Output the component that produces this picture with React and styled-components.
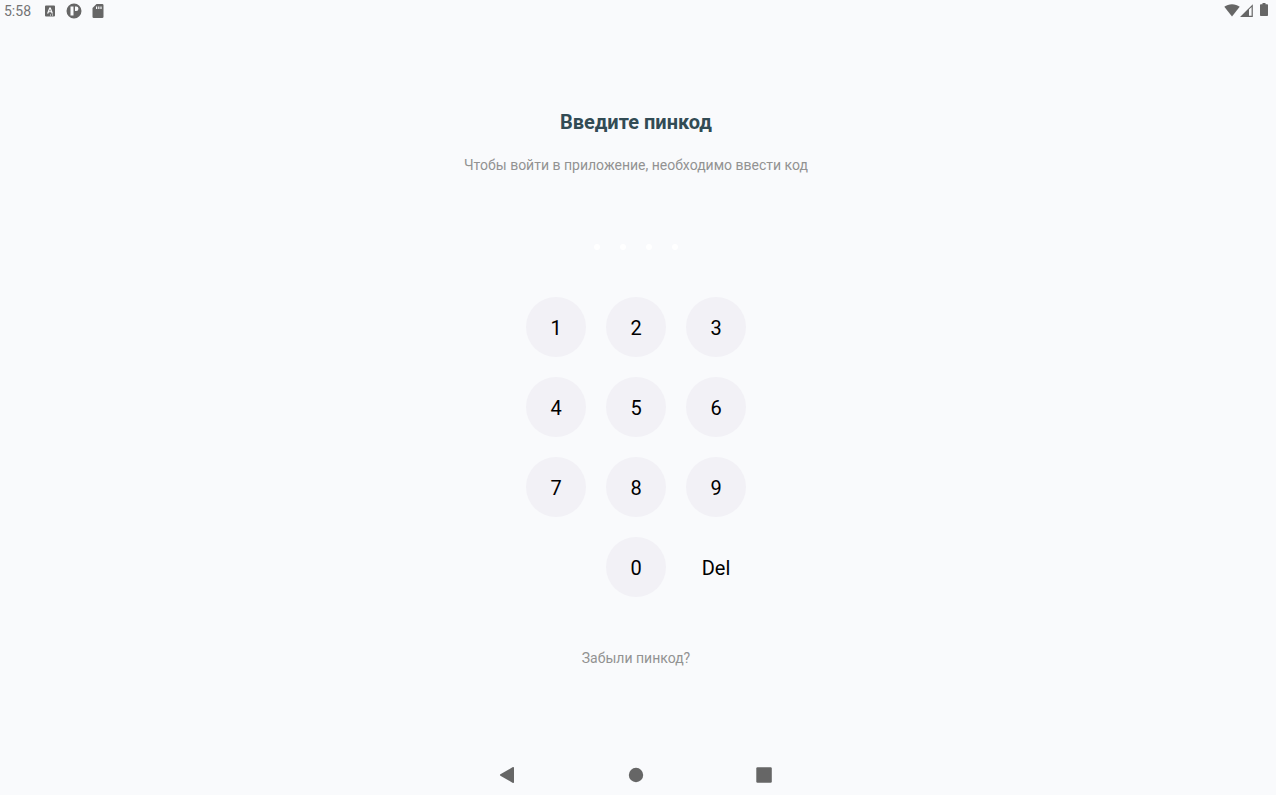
import React, { useState } from "react";
import styled, { createGlobalStyle } from "styled-components";

const GlobalStyle = createGlobalStyle`
  *, *::before, *::after { box-sizing: border-box; }
  body {
    margin: 0;
    background: #f9fafc;
    font-family: Roboto, "Liberation Sans", sans-serif;
  }
`;

const Screen = styled.div`
  min-height: 100vh;
  display: flex;
  flex-direction: column;
  padding: 0 4px 0 0;
  background: #f9fafc;
`;

const StatusBar = styled.header`
  display: flex;
  justify-content: space-between;
  align-items: center;
  height: 22px;
  padding: 0 0 0 4px;
  color: #666666;
`;

const StatusGroup = styled.div`
  display: flex;
  align-items: center;
  gap: ${({ $gap }) => $gap}px;
`;

const Clock = styled.time`
  font-size: 14px;
  line-height: 20px;
  margin-right: 3px;
  color: #737375;
`;

const Glyph = styled.svg`
  display: block;
  fill: currentColor;
`;

const Content = styled.main`
  flex: 1;
  display: flex;
  flex-direction: column;
  align-items: center;
  padding-top: 88px;
`;

const Title = styled.h1`
  margin: 0;
  font-size: 20px;
  line-height: 24px;
  font-weight: 700;
  color: #324b54;
`;

const Hint = styled.p`
  margin: 21px 0 0;
  font-size: 14px;
  line-height: 20px;
  color: #929292;
`;

const Dots = styled.div`
  display: flex;
  gap: 20px;
  margin-top: 69px;
`;

const Dot = styled.span`
  width: 6px;
  height: 6px;
  border-radius: 50%;
  background: ${({ $filled }) => ($filled ? "#324b54" : "#ffffff")};
`;

const Keypad = styled.div`
  display: grid;
  grid-template-columns: repeat(3, 60px);
  gap: 20px;
  margin-top: 47px;
`;

const Key = styled.button`
  height: 60px;
  padding: 2px 0 0;
  border: 0;
  border-radius: 50%;
  background: ${({ $plain }) => ($plain ? "transparent" : "#f2f1f6")};
  color: #000000;
  font-family: inherit;
  font-size: 20px;
  line-height: 24px;
  cursor: pointer;
`;

const ZeroKey = styled(Key)`
  grid-column: 2;
`;

const ForgotButton = styled.button`
  margin-top: 51px;
  padding: 0;
  border: 0;
  background: none;
  color: #929292;
  font-family: inherit;
  font-size: 14px;
  line-height: 20px;
  cursor: pointer;
`;

const NavBar = styled.nav`
  display: flex;
  justify-content: center;
  gap: 104px;
  padding: 8px 0;
`;

const NavButton = styled.button`
  padding: 0;
  border: 0;
  background: none;
  color: #666666;
  cursor: pointer;
`;

const PIN_LENGTH = 4;
const DIGITS = ["1", "2", "3", "4", "5", "6", "7", "8", "9"];

export default function App() {
  const [pin, setPin] = useState("");
  const press = (digit) => setPin((value) => (value + digit).slice(0, PIN_LENGTH));

  return (
    <Screen>
      <GlobalStyle />
      <StatusBar>
        <StatusGroup $gap={8}>
          <Clock>5:58</Clock>
          <Glyph width="16" height="16" viewBox="0 0 16 16" aria-hidden="true">
            <path
              fillRule="evenodd"
              d="M4 2.500h8a1 1 0 0 1 1 1v9a1 1 0 0 1-1 1H4a1 1 0 0 1-1-1v-9a1 1 0 0 1 1-1zM7.300 4.500 5 10.500h1.400l.4-1.200h2.400l.4 1.200H11L8.700 4.500zM8 6l.8 2.200H7.200zM8 11.500h1v1H8zM10 11.500h1v1h-1z"
            />
          </Glyph>
          <Glyph width="16" height="16" viewBox="0 0 16 16" aria-hidden="true">
            <path
              fillRule="evenodd"
              d="M8 .5a7.500 7.500 0 1 1 0 15 7.500 7.500 0 0 1 0-15zM4.500 3.500v9H7.500v-9zM9 3.500V8h1.200a2.250 2.250 0 0 0 0-4.500z"
            />
          </Glyph>
          <Glyph width="16" height="16" viewBox="0 0 16 16" aria-hidden="true">
            <path
              fillRule="evenodd"
              d="M6.500 1h5.700A1.300 1.300 0 0 1 13.500 2.300v11.400a1.300 1.300 0 0 1-1.300 1.300H3.800a1.300 1.300 0 0 1-1.300-1.300V5zM6 3.500v2.500h1.200V3.500zM8.200 3.500v2.500h1.200V3.500zM10.400 3.500v2.500h1.200V3.500z"
            />
          </Glyph>
        </StatusGroup>
        <StatusGroup $gap={0}>
          <Glyph width="16" height="16" viewBox="0 0 16 16" aria-hidden="true">
            <path d="M8 13.500 .3 3.800C2.500 2.200 5.100 1.300 8 1.300s5.500.9 7.700 2.500z" />
          </Glyph>
          <Glyph width="16" height="16" viewBox="0 0 16 16" aria-hidden="true">
            <path fillRule="evenodd" d="M0 14 12.800 1.200V14zM9 6.500v6.300h2.600V4z" />
          </Glyph>
          <Glyph width="16" height="16" viewBox="0 0 16 16" aria-hidden="true">
            <path d="M6.500 0h3v1.300h1.700a.8.8 0 0 1 .8.8v10.100a.8.8 0 0 1-.8.8H4.800a.8.8 0 0 1-.8-.8V2.100a.8.8 0 0 1 .8-.8h1.700z" />
          </Glyph>
        </StatusGroup>
      </StatusBar>

      <Content>
        <Title>Введите пинкод</Title>
        <Hint>Чтобы войти в приложение, необходимо ввести код</Hint>
        <Dots role="status" aria-label={`${pin.length} / ${PIN_LENGTH}`}>
          {Array.from({ length: PIN_LENGTH }, (_, i) => (
            <Dot key={i} $filled={i < pin.length} />
          ))}
        </Dots>
        <Keypad>
          {DIGITS.map((digit) => (
            <Key key={digit} type="button" onClick={() => press(digit)}>
              {digit}
            </Key>
          ))}
          <ZeroKey type="button" onClick={() => press("0")}>
            0
          </ZeroKey>
          <Key $plain type="button" onClick={() => setPin((value) => value.slice(0, -1))}>
            Del
          </Key>
        </Keypad>
        <ForgotButton type="button">Забыли пинкод?</ForgotButton>
      </Content>

      <NavBar>
        <NavButton type="button" aria-label="Назад">
          <Glyph width="24" height="24" viewBox="0 0 24 24" aria-hidden="true">
            <path d="M18 4.800v14.400c0 .7-.5 1-1.100.7L4.400 12.700c-.6-.4-.6-1 0-1.400L16.900 4.100c.6-.3 1.100 0 1.100.7z" />
          </Glyph>
        </NavButton>
        <NavButton type="button" aria-label="Домой">
          <Glyph width="24" height="24" viewBox="0 0 24 24" aria-hidden="true">
            <circle cx="12" cy="12" r="7.200" />
          </Glyph>
        </NavButton>
        <NavButton type="button" aria-label="Недавние">
          <Glyph width="24" height="24" viewBox="0 0 24 24" aria-hidden="true">
            <rect x="4.300" y="4.200" width="15.500" height="15.500" rx="1.200" />
          </Glyph>
        </NavButton>
      </NavBar>
    </Screen>
  );
}
